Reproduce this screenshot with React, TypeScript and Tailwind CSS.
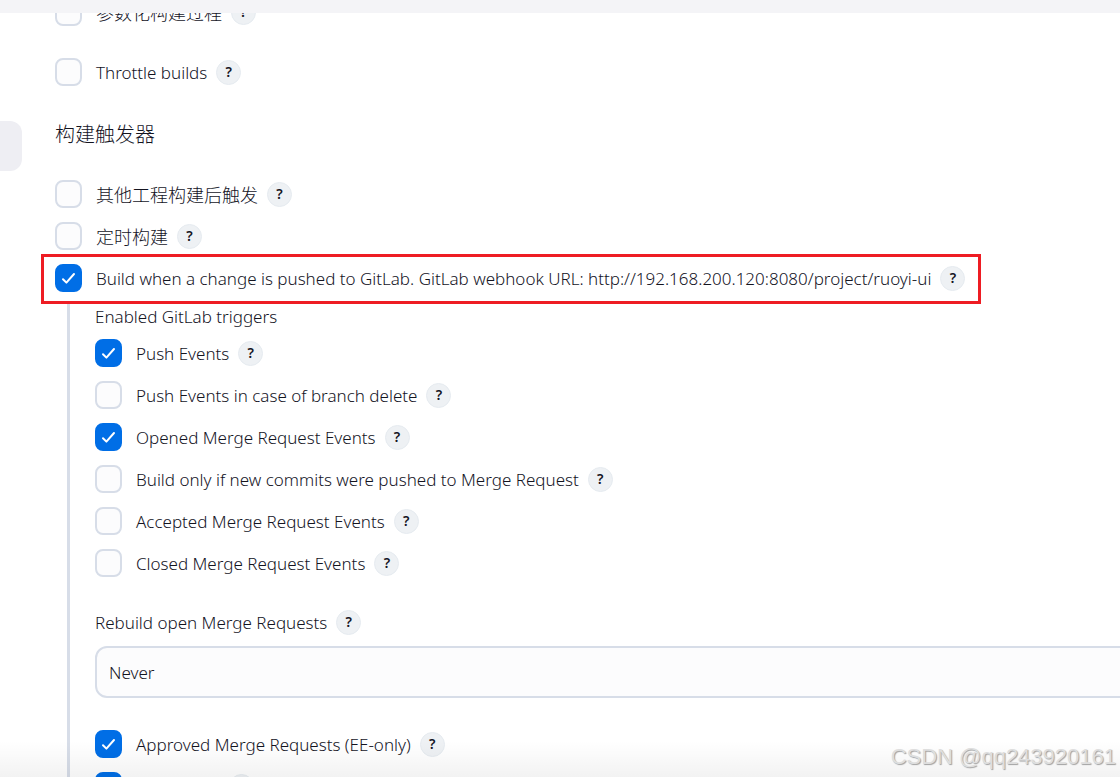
import React, { useId, useState } from "react";

function Help({ label }: { label: string }) {
  return (
    <button
      type="button"
      aria-label={`Help for ${label}`}
      className="flex size-[25px] shrink-0 items-center justify-center rounded-full border border-[#e6ebf0] bg-[#eef1f4] font-['Noto_Sans',sans-serif] text-[14px] leading-none font-semibold text-[#14141f]"
    >
      ?
    </button>
  );
}

function Option({
  label,
  checked = false,
  highlighted = false,
}: {
  label: string;
  checked?: boolean;
  highlighted?: boolean;
}) {
  const id = useId();
  const [on, setOn] = useState(checked);
  return (
    <div className="relative flex h-7 w-fit items-center whitespace-nowrap">
      <span className="grid shrink-0">
        <input
          id={id}
          type="checkbox"
          checked={on}
          onChange={(e) => setOn(e.target.checked)}
          className="col-start-1 row-start-1 h-7 w-[27px] appearance-none rounded-lg border-2 border-[#d7dde8] bg-[#fcfcfd] checked:border-[#006ee6] checked:bg-[#006ee6]"
        />
        {on && (
          <svg
            viewBox="0 0 27 28"
            className="pointer-events-none col-start-1 row-start-1 h-7 w-[27px]"
            fill="none"
            stroke="white"
            strokeWidth="2"
            strokeLinecap="round"
            strokeLinejoin="round"
          >
            <path d="M8 15.2l3.4 3.4L19 10" />
          </svg>
        )}
      </span>
      <label htmlFor={id} className="mr-[9px] ml-3.5 pt-0.5">
        {label}
      </label>
      <Help label={label} />
      {highlighted && (
        <span className="pointer-events-none absolute -top-2.5 -right-4 -bottom-3 -left-3.5 border-3 border-[#ee1c23]" />
      )}
    </div>
  );
}

const triggers = [
  { label: "Push Events", checked: true },
  { label: "Push Events in case of branch delete" },
  { label: "Opened Merge Request Events", checked: true },
  { label: "Build only if new commits were pushed to Merge Request" },
  { label: "Accepted Merge Request Events" },
  { label: "Closed Merge Request Events" },
];

export default function App() {
  return (
    <div className="relative flex h-screen flex-col overflow-hidden bg-white font-['Noto_Sans','Noto_Sans_CJK_SC',sans-serif] text-[17px] leading-7 font-light text-[#14141f]">
      <header className="z-10 h-[13px] shrink-0 bg-[#f4f4f7]" />
      <div className="flex min-h-0 flex-1">
        <aside className="w-[22px] shrink-0 pt-[108px]">
          <div className="h-[50px] rounded-r-xl bg-[#eeeef3]" />
        </aside>
        <main className="-mt-[15px] min-w-0 flex-1 pl-[33px]">
          <div className="flex flex-col gap-8">
            <div className="text-[18px]">
              <Option label="参数化构建过程" />
            </div>
            <Option label="Throttle builds" />
          </div>
          <h2 className="mt-[35px] mb-[31px] text-[20px] leading-7">构建触发器</h2>
          <div className="flex flex-col gap-3.5">
            <div className="flex flex-col gap-3.5 text-[18px]">
              <Option label="其他工程构建后触发" />
              <Option label="定时构建" />
            </div>
            <Option
              label="Build when a change is pushed to GitLab. GitLab webhook URL: http://192.168.200.120:8080/project/ruoyi-ui"
              checked
              highlighted
            />
          </div>
          <div className="mt-[11px] ml-3 border-l-3 border-[#d7dde8] pl-[25px]">
            <p>Enabled GitLab triggers</p>
            <div className="mt-2 flex flex-col gap-3.5">
              {triggers.map((t) => (
                <Option key={t.label} {...t} />
              ))}
            </div>
            <div className="mt-[31px] flex h-7 items-center gap-[9px]">
              <label htmlFor="rebuild" className="pt-0.5">
                Rebuild open Merge Requests
              </label>
              <Help label="Rebuild open Merge Requests" />
            </div>
            <div className="mt-2.5 -mr-4">
              <select
                id="rebuild"
                className="h-13 w-full appearance-none rounded-xl border-2 border-[#d7dde8] bg-[#fcfcfd] px-3 pt-0.5"
              >
                <option>Never</option>
              </select>
            </div>
            <div className="mt-8 flex flex-col gap-3.5">
              <Option label="Approved Merge Requests (EE-only)" checked />
              <Option label="Comments" checked />
            </div>
          </div>
        </main>
      </div>
      <div className="pointer-events-none absolute inset-x-0 bottom-0 h-9 bg-linear-to-b from-transparent to-black/5" />
      <p className="pointer-events-none absolute right-1 bottom-1 font-['Liberation_Sans',sans-serif] text-[22px] leading-8 font-normal text-[#dedede] [text-shadow:1px_1px_1px_#a0a0a0]">
        CSDN @qq243920161
      </p>
    </div>
  );
}
